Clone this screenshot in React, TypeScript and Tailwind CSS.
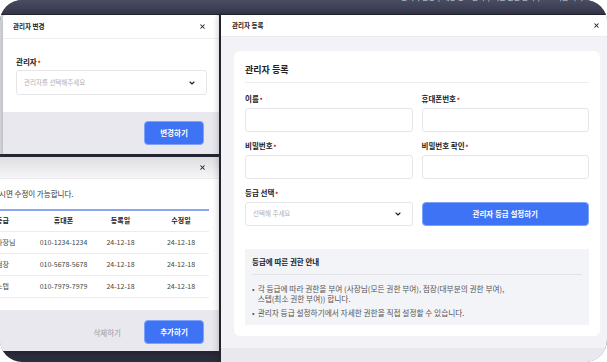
import { ChevronDown, X } from "lucide-react";

const font = { fontFamily: '"Noto Sans CJK KR", "Noto Sans", sans-serif' };

const Req = () => <span className="text-[#e5322d] ml-[1px] align-top leading-none">•</span>;

const rows = [
  { grade: "사장님", phone: "010-1234-1234", reg: "24-12-18", mod: "24-12-18" },
  { grade: "점장", phone: "010-5678-5678", reg: "24-12-18", mod: "24-12-18" },
  { grade: "스텝", phone: "010-7979-7979", reg: "24-12-18", mod: "24-12-18" },
];

const BlueButton = ({ label, className }: { label: string; className: string }) => (
  <button className={`bg-[#3e73f5] border border-[#7ea2fa] rounded-[4px] text-white font-bold text-[7.5px] ${className}`}>
    {label}
  </button>
);

const ChangeModal = () => (
  <div className="h-[139px] bg-[#dcdce3] pl-[3px]">
    <div className="w-[216px] h-full bg-white rounded-t-[3px] flex flex-col overflow-hidden shadow-[0_2px_6px_rgba(0,0,0,0.25)]">
      <div className="h-[24px] shrink-0 flex items-center justify-between pl-[10px] pr-[13px] border-b border-[#efeff2]">
        <span className="text-[6.5px] font-bold text-[#222]">관리자 변경</span>
        <X size={7} strokeWidth={3.5} className="text-[#222]" />
      </div>
      <div className="pt-[18px] px-[13px] pb-[17px] pr-[12px]">
        <div className="text-[7.5px] leading-[10px] font-bold text-[#222]">
          관리자<Req />
        </div>
        <div className="mt-[3px] h-[25px] border border-[#e6e6ea] rounded-[3px] flex items-center justify-between pl-[7px] pr-[10px]">
          <span className="text-[6.5px] text-[#aeaeb4]">관리자를 선택해주세요</span>
          <ChevronDown size={8} strokeWidth={3.5} className="text-[#222]" />
        </div>
      </div>
      <div className="flex-1 bg-[#e8e8ee] flex justify-end items-start pt-[9px] pr-[15px]">
        <BlueButton label="변경하기" className="w-[60px] h-[24px]" />
      </div>
    </div>
  </div>
);

const ListModal = () => (
  <div className="mt-[3px] w-[219px] h-[194px] bg-white flex flex-col overflow-hidden shadow-[0_2px_6px_rgba(0,0,0,0.25)]">
    <div className="h-[22px] shrink-0 bg-gradient-to-b from-[#dedee2] to-[#f6f6f8] border-b border-[#ececf0] flex items-center justify-end pr-[13px]">
      <X size={7} strokeWidth={3.5} className="text-[#222]" />
    </div>
    <div className="pr-[10px]">
      <div className="h-[30px] flex items-center -ml-[1px] text-[7.5px] text-[#333]">시면 수정이 가능합니다.</div>
      <div className="h-[1.5px] bg-[#8ba6f6]" />
      <div className="-ml-[4px] text-[7px] text-[#444]">
        <div className="grid grid-cols-[43px_49px_65px_56px] h-[21px] items-center text-center font-bold text-[#222] border-b border-[#ececf0]">
          <span className="text-left">등급</span>
          <span>휴대폰</span>
          <span>등록일</span>
          <span>수정일</span>
        </div>
        {rows.map((r) => (
          <div
            key={r.phone}
            className="grid grid-cols-[43px_49px_65px_56px] h-[22px] items-center text-center border-b border-[#ececf0]"
          >
            <span className="text-left">{r.grade}</span>
            <span className="whitespace-nowrap">{r.phone}</span>
            <span>{r.reg}</span>
            <span>{r.mod}</span>
          </div>
        ))}
      </div>
    </div>
    <div className="mt-auto h-[41px] bg-[#e8e8ee] flex items-start justify-end pt-[10px] pr-[15px] gap-[23px]">
      <span className="text-[7.5px] text-[#9a9aa3] mt-[7px]">삭제하기</span>
      <BlueButton label="추가하기" className="w-[60px] h-[24px]" />
    </div>
  </div>
);

const Field = ({ label }: { label: string }) => (
  <div className="flex flex-col">
    <div className="text-[7.5px] leading-[10px] font-bold text-[#222]">
      {label}
      <Req />
    </div>
    <div className="mt-[4px] h-[24px] bg-white border border-[#e6e6ea] rounded-[3px]" />
  </div>
);

const RegisterModal = () => (
  <div className="ml-[2px] w-[392px] shrink-0 h-[400px] bg-[#f3f3f7] rounded-tl-[3px] flex flex-col shadow-[-3px_0_6px_rgba(0,0,0,0.2)]">
    <div className="h-[22px] shrink-0 bg-white flex items-center justify-between pl-[11px] pr-[13px] border-b border-[#ececf0]">
      <span className="text-[6.5px] font-bold text-[#222]">관리자 등록</span>
      <X size={7} strokeWidth={3.5} className="text-[#222]" />
    </div>
    <div className="px-[13px] pt-[14px]">
      <div className="bg-white rounded-[6px] px-[11px] pt-[13px] pb-[11px]">
        <div className="text-[9px] leading-[12px] font-bold text-[#222]">관리자 등록</div>
        <div className="mt-[6px] h-px bg-[#ececf0]" />
        <div className="grid grid-cols-2 gap-x-[9px] gap-y-[9px] mt-[11px]">
          <Field label="이름" />
          <Field label="휴대폰번호" />
          <Field label="비밀번호" />
          <Field label="비밀번호 확인" />
          <div className="flex flex-col">
            <div className="text-[7.5px] leading-[10px] font-bold text-[#222]">
              등급 선택<Req />
            </div>
            <div className="mt-[4px] h-[24px] bg-white border border-[#e6e6ea] rounded-[3px] flex items-center justify-between pl-[7px] pr-[10px]">
              <span className="text-[6.5px] text-[#aeaeb4]">선택해 주세요</span>
              <ChevronDown size={8} strokeWidth={3.5} className="text-[#222]" />
            </div>
          </div>
          <div className="flex flex-col justify-end">
            <BlueButton label="관리자 등급 설정하기" className="h-[24px] w-full" />
          </div>
        </div>
        <div className="mt-[23px] bg-[#f3f4f8] px-[7px] pt-[8px] h-[76px]">
          <div className="text-[7.5px] leading-[10px] font-bold text-[#222]">등급에 따른 권한 안내</div>
          <div className="mt-[7px] h-px bg-[#e2e3e8]" />
          <ul className="mt-[9px] text-[7.7px] leading-[9.5px] text-[#555]">
            <li className="flex gap-[3px]">
              <span>•</span>
              <span>
                각 등급에 따라 권한을 부여 (사장님(모든 권한 부여), 점장(대부분의 권한 부여),
                <br />
                스텝(최소 권한 부여)) 합니다.
              </span>
            </li>
            <li className="flex gap-[3px] mt-[4.5px]">
              <span>•</span>
              <span>관리자 등급 설정하기에서 자세한 권한을 직접 설정할 수 있습니다.</span>
            </li>
          </ul>
        </div>
      </div>
    </div>
    <div className="mt-[12px] flex-1 bg-[#e8e8ee] pt-[10px] pl-[317px]">
      <BlueButton label="등록하기" className="w-[56px] h-[24px]" />
    </div>
  </div>
);

export default function App() {
  return (
    <div className="w-[607px] h-[362px] bg-white" style={font}>
      <div className="w-full h-full rounded-[22px] overflow-hidden bg-[#2b2d3c] flex flex-col">
        {/* top bar */}
        <div className="h-[15px] shrink-0 bg-gradient-to-b from-[#4a4d61] to-[#34364a] border-b border-[#24252f] flex justify-end pr-[24px] overflow-hidden">
          <span className="-mt-[7px] text-[7px] leading-[9px] text-[#d9dae2] whitespace-nowrap">
            관리자 설정 &nbsp;|&nbsp; 매장 정보 관리 &nbsp;|&nbsp; 직원 권한 관리 &nbsp;|&nbsp; 로그아웃 하기
          </span>
        </div>

        <div className="flex flex-1 min-h-0">
          <div className="w-[219px] shrink-0 flex flex-col">
            <ChangeModal />
            <ListModal />
          </div>
          <RegisterModal />
        </div>
      </div>
    </div>
  );
}
